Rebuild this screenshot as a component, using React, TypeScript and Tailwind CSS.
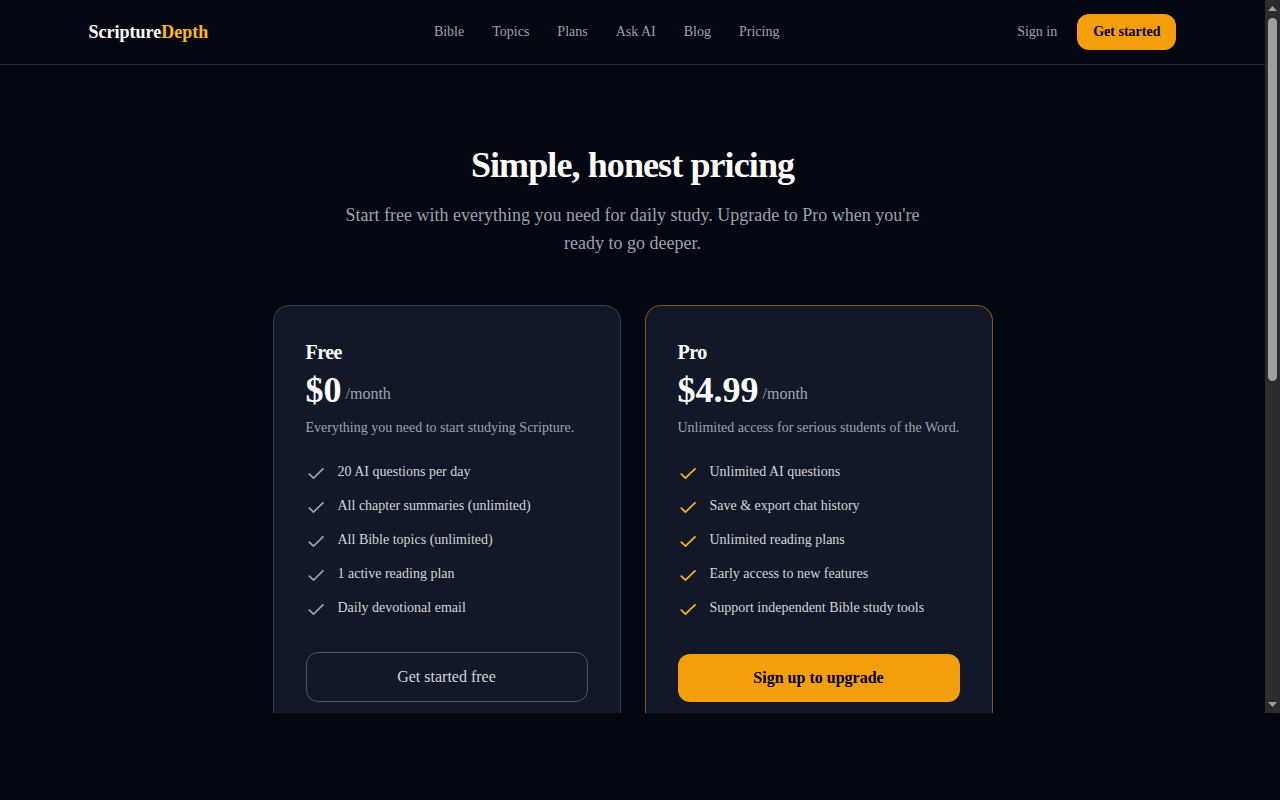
import React from 'react';

type Plan = {
  name: string;
  price: string;
  description: string;
  features: string[];
  cta: string;
  highlighted: boolean;
};

const navLinks = ['Bible', 'Topics', 'Plans', 'Ask AI', 'Blog', 'Pricing'];

const plans: Plan[] = [
  {
    name: 'Free',
    price: '$0',
    description: 'Everything you need to start studying Scripture.',
    features: [
      '20 AI questions per day',
      'All chapter summaries (unlimited)',
      'All Bible topics (unlimited)',
      '1 active reading plan',
      'Daily devotional email',
    ],
    cta: 'Get started free',
    highlighted: false,
  },
  {
    name: 'Pro',
    price: '$4.99',
    description: 'Unlimited access for serious students of the Word.',
    features: [
      'Unlimited AI questions',
      'Save & export chat history',
      'Unlimited reading plans',
      'Early access to new features',
      'Support independent Bible study tools',
    ],
    cta: 'Sign up to upgrade',
    highlighted: true,
  },
];

function CheckIcon({ className }: { className: string }) {
  return (
    <svg viewBox="0 0 20 20" fill="none" stroke="currentColor" strokeWidth="1.7" className={className} aria-hidden="true">
      <path d="M2.8 9.6l4.7 4.5L17.5 4.4" />
    </svg>
  );
}

function Header() {
  return (
    <header className="shrink-0 border-b border-[#1f2937]">
      <div className="mx-auto flex h-16 max-w-6xl items-center justify-between px-8">
        <a href="#" className="text-lg font-bold text-white">
          Scripture<span className="text-[#ffb914]">Depth</span>
        </a>
        <nav className="flex items-center gap-7 text-sm text-[#9ca3af]">
          {navLinks.map((link) => (
            <a key={link} href="#">{link}</a>
          ))}
        </nav>
        <div className="flex items-center gap-5 pl-3 text-sm">
          <a href="#" className="text-[#9ca3af]">Sign in</a>
          <a href="#" className="rounded-xl bg-[#f59e0b] px-4 py-2 font-semibold text-black">Get started</a>
        </div>
      </div>
    </header>
  );
}

function PlanCard({ plan }: { plan: Plan }) {
  return (
    <div
      className={`flex flex-col rounded-2xl border bg-[#111827] p-8 ${
        plan.highlighted ? 'border-[#d97706]/60' : 'border-[#374151]'
      }`}
    >
      <h2 className="mb-1 text-xl font-bold tracking-tight text-white">{plan.name}</h2>
      <div className="mb-2 flex items-end gap-1">
        <span className="text-4xl font-bold text-white">{plan.price}</span>
        <span className="mb-1 text-[#9ca3af]">/month</span>
      </div>
      <p className="mb-6 text-sm text-[#9ca3af]">{plan.description}</p>

      <ul className="mb-8 flex flex-col gap-3">
        {plan.features.map((feature) => (
          <li key={feature} className="flex items-start gap-3 text-sm text-[#d1d5db]">
            <CheckIcon className={`mt-0.5 size-5 shrink-0 ${plan.highlighted ? 'text-[#ffb914]' : 'text-[#9ca3af]'}`} />
            {feature}
          </li>
        ))}
      </ul>

      <button
        type="button"
        className={`mt-auto w-full rounded-xl py-3 ${
          plan.highlighted
            ? 'bg-[#f59e0b] font-semibold text-black'
            : 'border border-[#4b5563] text-[#d1d5db]'
        }`}
      >
        {plan.cta}
      </button>
    </div>
  );
}

function ScrollTrack() {
  return (
    <div className="flex w-[15px] shrink-0 flex-col items-center justify-between bg-[#2c2c2c] py-1.5 text-[#9f9f9f]" aria-hidden="true">
      <svg viewBox="0 0 9 5" className="h-[5px] w-[9px] shrink-0" fill="currentColor">
        <path d="M4.5 0L9 5H0z" />
      </svg>
      <div className="flex w-[9px] grow flex-col pt-[7px]">
        <div className="h-[53%] rounded-full bg-current" />
      </div>
      <svg viewBox="0 0 9 5" className="h-[5px] w-[9px] shrink-0" fill="currentColor">
        <path d="M0 0h9L4.5 5z" />
      </svg>
    </div>
  );
}

export default function App() {
  return (
    <div className="h-screen bg-[#030712] pb-[87px] font-['Liberation_Serif',serif]">
      <div className="flex h-full">
        <div className="min-w-0 flex-1 overflow-y-auto [scrollbar-width:none]">
          <Header />
          <main className="mx-auto max-w-3xl px-6 py-20">
            <div className="mb-12 text-center">
              <h1 className="mb-4 text-4xl font-bold tracking-tight text-white">Simple, honest pricing</h1>
              <p className="mx-auto max-w-xl text-lg text-[#9ca3af]">
                Start free with everything you need for daily study. Upgrade to Pro when you're ready to go deeper.
              </p>
            </div>
            <div className="grid grid-cols-2 gap-6">
              {plans.map((plan) => (
                <PlanCard key={plan.name} plan={plan} />
              ))}
            </div>
          </main>
        </div>
        <ScrollTrack />
      </div>
    </div>
  );
}
